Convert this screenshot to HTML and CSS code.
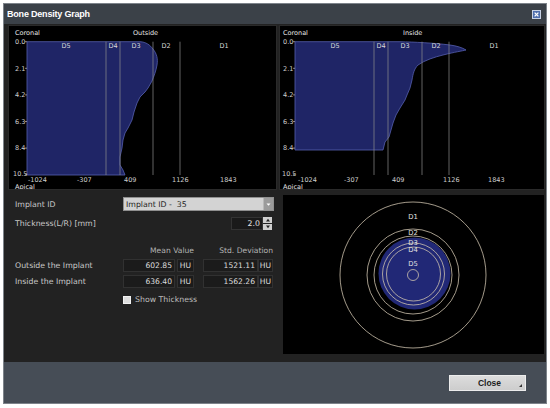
FILE: index.html
```html
<!DOCTYPE html>
<html>
<head>
<meta charset="utf-8">
<title>Bone Density Graph</title>
<link rel="stylesheet" href="styles.css">
</head>
<body>
<div class="window">
  <div class="titlebar">
    <span class="title">Bone Density Graph</span>
    <svg class="xbtn" width="9" height="9" viewBox="0 0 9 9">
      <rect x="0.5" y="0.5" width="8" height="8" fill="#4f6fae" stroke="#c9d3e6" stroke-width="1"/>
      <path d="M2.6 2.6 L6.4 6.4 M6.4 2.6 L2.6 6.4" stroke="#fff" stroke-width="1.3"/>
    </svg>
  </div>
  <div class="content">
    <div class="graph">
      <svg class="plot" width="269" height="165" viewBox="0 0 269 165">
        <path class="fill" d="M19 16.7 L132 16.7 C138 17 142 20 145 24 C149 29 150 34 149 40 C148 46 146 51 144 56 L140 63 L137 67 L132 72 L129 78 L126 87 L124 95 L120 103 L117 108 L115 115 L114 123 L112 132 L112 140 L115 145 L117 150 L19 150 Z"/>
        <g class="vl">
          <line x1="98" y1="16.7" x2="98" y2="150"/>
          <line x1="112" y1="16.7" x2="112" y2="150"/>
          <line x1="145" y1="16.7" x2="145" y2="150"/>
          <line x1="172" y1="16.7" x2="172" y2="150"/>
        </g>
        <g class="tk">
          <line x1="17" y1="16.7" x2="19" y2="16.7"/>
          <line x1="17" y1="43.3" x2="19" y2="43.3"/>
          <line x1="17" y1="69.9" x2="19" y2="69.9"/>
          <line x1="17" y1="96.5" x2="19" y2="96.5"/>
          <line x1="17" y1="123.1" x2="19" y2="123.1"/>
          <line x1="17" y1="149.7" x2="19" y2="149.7"/>
        </g>
        <text class="gt hd" x="7" y="10">Coronal</text>
        <text class="gt hd" x="125" y="10">Outside</text>
        <text class="gt dl" x="58" y="23">D5</text>
        <text class="gt dl" x="105" y="23">D4</text>
        <text class="gt dl" x="128" y="23">D3</text>
        <text class="gt dl" x="158" y="23">D2</text>
        <text class="gt dl" x="216" y="23">D1</text>
        <text class="gt" x="7" y="19">0.0</text>
        <text class="gt" x="7" y="45.6">2.1</text>
        <text class="gt" x="7" y="72.2">4.2</text>
        <text class="gt" x="7" y="98.8">6.3</text>
        <text class="gt" x="7" y="125.4">8.4</text>
        <text class="gt" x="5" y="151">10.5</text>
        <text class="gt" x="20" y="157">-1024</text>
        <text class="gt" x="69" y="157">-307</text>
        <text class="gt" x="116" y="157">409</text>
        <text class="gt" x="164" y="157">1126</text>
        <text class="gt" x="212" y="157">1843</text>
        <text class="gt hd" x="7" y="164">Apical</text>
      </svg>
    </div>
    <div class="graph">
      <svg class="plot" width="266" height="165" viewBox="0 0 266 165">
        <path class="fill" d="M16 16.7 L121 16.7 C135 17 155 18 171 20 C178 21 183 22.5 187 25 C183 26 176 27 164 30 C156 32 146 35 139 40 C135 44 134 49 133 55 L131 63 L128 70 L126 75 L121 83 L117 90 L114 98 L112 105 L110 112 L106 117 L104 125 L16 125 Z"/>
        <g class="vl">
          <line x1="95" y1="16.7" x2="95" y2="150"/>
          <line x1="109" y1="16.7" x2="109" y2="150"/>
          <line x1="143" y1="16.7" x2="143" y2="150"/>
          <line x1="170" y1="16.7" x2="170" y2="150"/>
        </g>
        <g class="tk">
          <line x1="14" y1="16.7" x2="16" y2="16.7"/>
          <line x1="14" y1="43.3" x2="16" y2="43.3"/>
          <line x1="14" y1="69.9" x2="16" y2="69.9"/>
          <line x1="14" y1="96.5" x2="16" y2="96.5"/>
          <line x1="14" y1="123.1" x2="16" y2="123.1"/>
          <line x1="14" y1="149.7" x2="16" y2="149.7"/>
        </g>
        <text class="gt hd" x="4" y="10">Coronal</text>
        <text class="gt hd" x="124" y="10">Inside</text>
        <text class="gt dl" x="56" y="23">D5</text>
        <text class="gt dl" x="102" y="23">D4</text>
        <text class="gt dl" x="126" y="23">D3</text>
        <text class="gt dl" x="157" y="23">D2</text>
        <text class="gt dl" x="215" y="23">D1</text>
        <text class="gt" x="4" y="19">0.0</text>
        <text class="gt" x="4" y="45.6">2.1</text>
        <text class="gt" x="4" y="72.2">4.2</text>
        <text class="gt" x="4" y="98.8">6.3</text>
        <text class="gt" x="4" y="125.4">8.4</text>
        <text class="gt" x="3" y="151">10.5</text>
        <text class="gt" x="19" y="157">-1024</text>
        <text class="gt" x="65" y="157">-307</text>
        <text class="gt" x="113" y="157">409</text>
        <text class="gt" x="164" y="157">1126</text>
        <text class="gt" x="209" y="157">1843</text>
        <text class="gt hd" x="4" y="164">Apical</text>
      </svg>
    </div>
    <div class="form">
      <div class="row r-id">
        <span class="flabel">Implant ID</span>
        <div class="select">
          <span class="sel-text">Implant ID -&nbsp; 35</span>
          <span class="sel-btn">
            <svg width="9" height="11" viewBox="0 0 9 11"><path d="M2.5 4.5 L6.5 4.5 L4.5 6.8 Z" fill="#fff"/></svg>
          </span>
        </div>
      </div>
      <div class="row r-th">
        <span class="flabel">Thickness(L/R) [mm]</span>
        <div class="spin">
          <span class="spin-val">2.0</span>
          <span class="spin-btns">
            <span class="sb"><svg width="8" height="6" viewBox="0 0 8 6"><path d="M2 4.5 L6 4.5 L4 1.8 Z" fill="#222"/></svg></span>
            <span class="sb"><svg width="8" height="6" viewBox="0 0 8 6"><path d="M2 1.5 L6 1.5 L4 4.2 Z" fill="#222"/></svg></span>
          </span>
        </div>
      </div>
      <div class="stats">
        <span class="hdr h-mean">Mean Value</span>
        <span class="hdr h-std">Std. Deviation</span>
        <span class="flabel">Outside the Implant</span>
        <span class="box num">602.85</span>
        <span class="box unit">HU</span>
        <span class="box num std">1521.11</span>
        <span class="box unit u2">HU</span>
        <span class="flabel">Inside the Implant</span>
        <span class="box num">636.40</span>
        <span class="box unit">HU</span>
        <span class="box num std">1562.26</span>
        <span class="box unit u2">HU</span>
      </div>
      <div class="check"><span class="cb"></span><span class="cb-label">Show Thickness</span></div>
    </div>
    <div class="circle-cell">
      <div class="circle-panel">
        <svg width="261" height="159" viewBox="0 0 261 159">
          <circle cx="131.5" cy="78.5" r="36" fill="#212876"/>
          <g class="ring">
            <circle cx="130" cy="80" r="73"/>
            <circle cx="130" cy="80" r="46"/>
            <circle cx="130" cy="80" r="39"/>
            <circle cx="130.5" cy="79" r="31"/>
            <circle cx="130.5" cy="79" r="27"/>
            <circle cx="130" cy="80" r="5.5"/>
          </g>
          <text class="gt cl" x="130" y="23.5">D1</text>
          <text class="gt cl" x="130" y="40">D2</text>
          <text class="gt cl" x="130" y="49.5">D3</text>
          <text class="gt cl" x="130" y="56.5">D4</text>
          <text class="gt cl" x="130" y="70.5">D5</text>
        </svg>
      </div>
    </div>
  </div>
  <div class="footer">
    <button class="close">Close<span class="grip"></span></button>
  </div>
</div>
</body>
</html>
```

FILE: styles.css
```css
* { box-sizing: border-box; margin: 0; padding: 0; }
html, body { background: #ffffff; }
body {
  width: 550px;
  height: 408px;
  overflow: hidden;
  font-family: "DejaVu Sans", sans-serif;
}
.window {
  margin: 3px 0 0 3px;
  width: 544px;
  height: 401px;
  border: 1px solid #7d838a;
  display: flex;
  flex-direction: column;
  background: #222222;
}
.titlebar {
  height: 20px;
  flex: none;
  background: #3b4148;
  display: flex;
  align-items: center;
  justify-content: space-between;
  padding: 0 5px 0 3px;
}
.title {
  font-family: "Liberation Sans", Arial, sans-serif;
  font-weight: bold;
  font-size: 9px;
  letter-spacing: -0.2px;
  color: #ffffff;
}
.xbtn { display: block; }
.content {
  flex: 1;
  display: grid;
  grid-template-columns: 269px 266px;
  grid-template-rows: 165px 1fr;
  gap: 2px;
  padding: 1px 1px 2px 4px;
  background: #222222;
}
.graph {
  background: #000000;
  border: 1px solid #2a2a2a;
  overflow: hidden;
}
.graph svg { display: block; margin: -1px; }
.fill { fill: #1f2566; stroke: #5560b0; stroke-width: 0.8; }
.vl line { stroke: #8c8c8c; stroke-width: 0.7; }
.tk line { stroke: #bbbbbb; stroke-width: 0.7; }
.gt {
  font-family: "DejaVu Sans", sans-serif;
  font-size: 6.5px;
  fill: #cfcfcf;
}
.gt.hd { fill: #e6e6e6; }
.gt.dl { text-anchor: middle; fill: #d8d8d8; }
.gt.cl { text-anchor: middle; fill: #e0e0e0; font-size: 6.8px; }
.ring circle { fill: none; stroke: #cdc2ad; stroke-width: 0.8; }

/* form */
.form {
  padding: 5px 3px 0 7px;
  display: flex;
  flex-direction: column;
  font-size: 8px;
  color: #c4c4c4;
}
.row { display: flex; align-items: center; }
.flabel { width: 108px; flex: none; font-size: 7.8px; color: #c8c8c8; white-space: nowrap; }
.select {
  flex: 1;
  height: 14px;
  background: #d3d3d3;
  border: 1px solid #8f8f8f;
  display: flex;
  align-items: center;
}
.sel-text { flex: 1; padding-left: 2px; font-size: 7.8px; color: #1e1e1e; }
.sel-btn {
  width: 10px;
  height: 12px;
  background: #9b9b9b;
  border-left: 1px solid #b8b8b8;
  display: flex;
  align-items: center;
  justify-content: center;
}
.sel-btn svg { display: block; }
.r-th { margin-top: 6px; }
.spin {
  margin-left: auto;
  margin-right: 2px;
  width: 41px;
  height: 13px;
  display: flex;
}
.spin-val {
  flex: 1;
  background: #1a1a1a;
  border: 1px solid #333333;
  color: #e2e2e2;
  font-size: 7.8px;
  text-align: right;
  padding-right: 2px;
  line-height: 11px;
}
.spin-btns { width: 9px; display: flex; flex-direction: column; gap: 1px; }
.sb {
  flex: 1;
  background: #cfcfcf;
  display: flex;
  align-items: center;
  justify-content: center;
}
.sb svg { display: block; width: 8px; height: 6px; }
.stats {
  margin-top: 15px;
  display: grid;
  grid-template-columns: 108px 54px 17px 64px 15px;
  grid-template-rows: 12px 14px 13px;
  row-gap: 2px;
}
.hdr { font-size: 7.6px; color: #b4b4b4; text-align: right; line-height: 12px; white-space: nowrap; }
.h-mean { grid-column: 2 / 4; }
.h-std { grid-column: 4 / 6; }
.stats .flabel { line-height: 13px; }
.box {
  height: 13px;
  align-self: start;
  background: #1b1b1b;
  border: 1px solid #313131;
  color: #dcdcdc;
  font-size: 7.6px;
  line-height: 11px;
  text-align: right;
  padding-right: 2px;
  white-space: nowrap;
}
.num { width: 52px; }
.num.std { width: 55px; justify-self: end; }
.unit { text-align: center; padding: 0; width: 17px; }
.u2 { width: 15px; justify-self: end; margin-left: 1px; }
.check {
  margin-top: 7px;
  margin-left: 108px;
  display: flex;
  align-items: center;
  gap: 4px;
}
.cb { width: 8px; height: 8px; background: #dedede; border: 1px solid #f2f2f2; flex: none; }
.cb-label { font-size: 7.8px; color: #bdbdbd; }

/* circle panel */
.circle-cell { padding: 3px 1px 6px 4px; }
.circle-panel { background: #000000; width: 100%; height: 100%; overflow: hidden; }
.circle-panel svg { display: block; }

/* footer */
.footer {
  height: 41px;
  flex: none;
  background: #464d56;
  display: flex;
  justify-content: flex-end;
  align-items: flex-start;
  padding: 13px 20px 0 0;
}
.close {
  position: relative;
  width: 77px;
  height: 16px;
  background: linear-gradient(#dcdcdc, #cdcdcd);
  border: 1px solid #ececec;
  font-family: "Liberation Sans", Arial, sans-serif;
  font-weight: bold;
  font-size: 8.5px;
  color: #1c1c1c;
  padding-left: 4px;
}
.grip {
  position: absolute;
  right: 3px;
  bottom: 3px;
  width: 0;
  height: 0;
  border-left: 3px solid transparent;
  border-bottom: 3px solid #333333;
}
```
